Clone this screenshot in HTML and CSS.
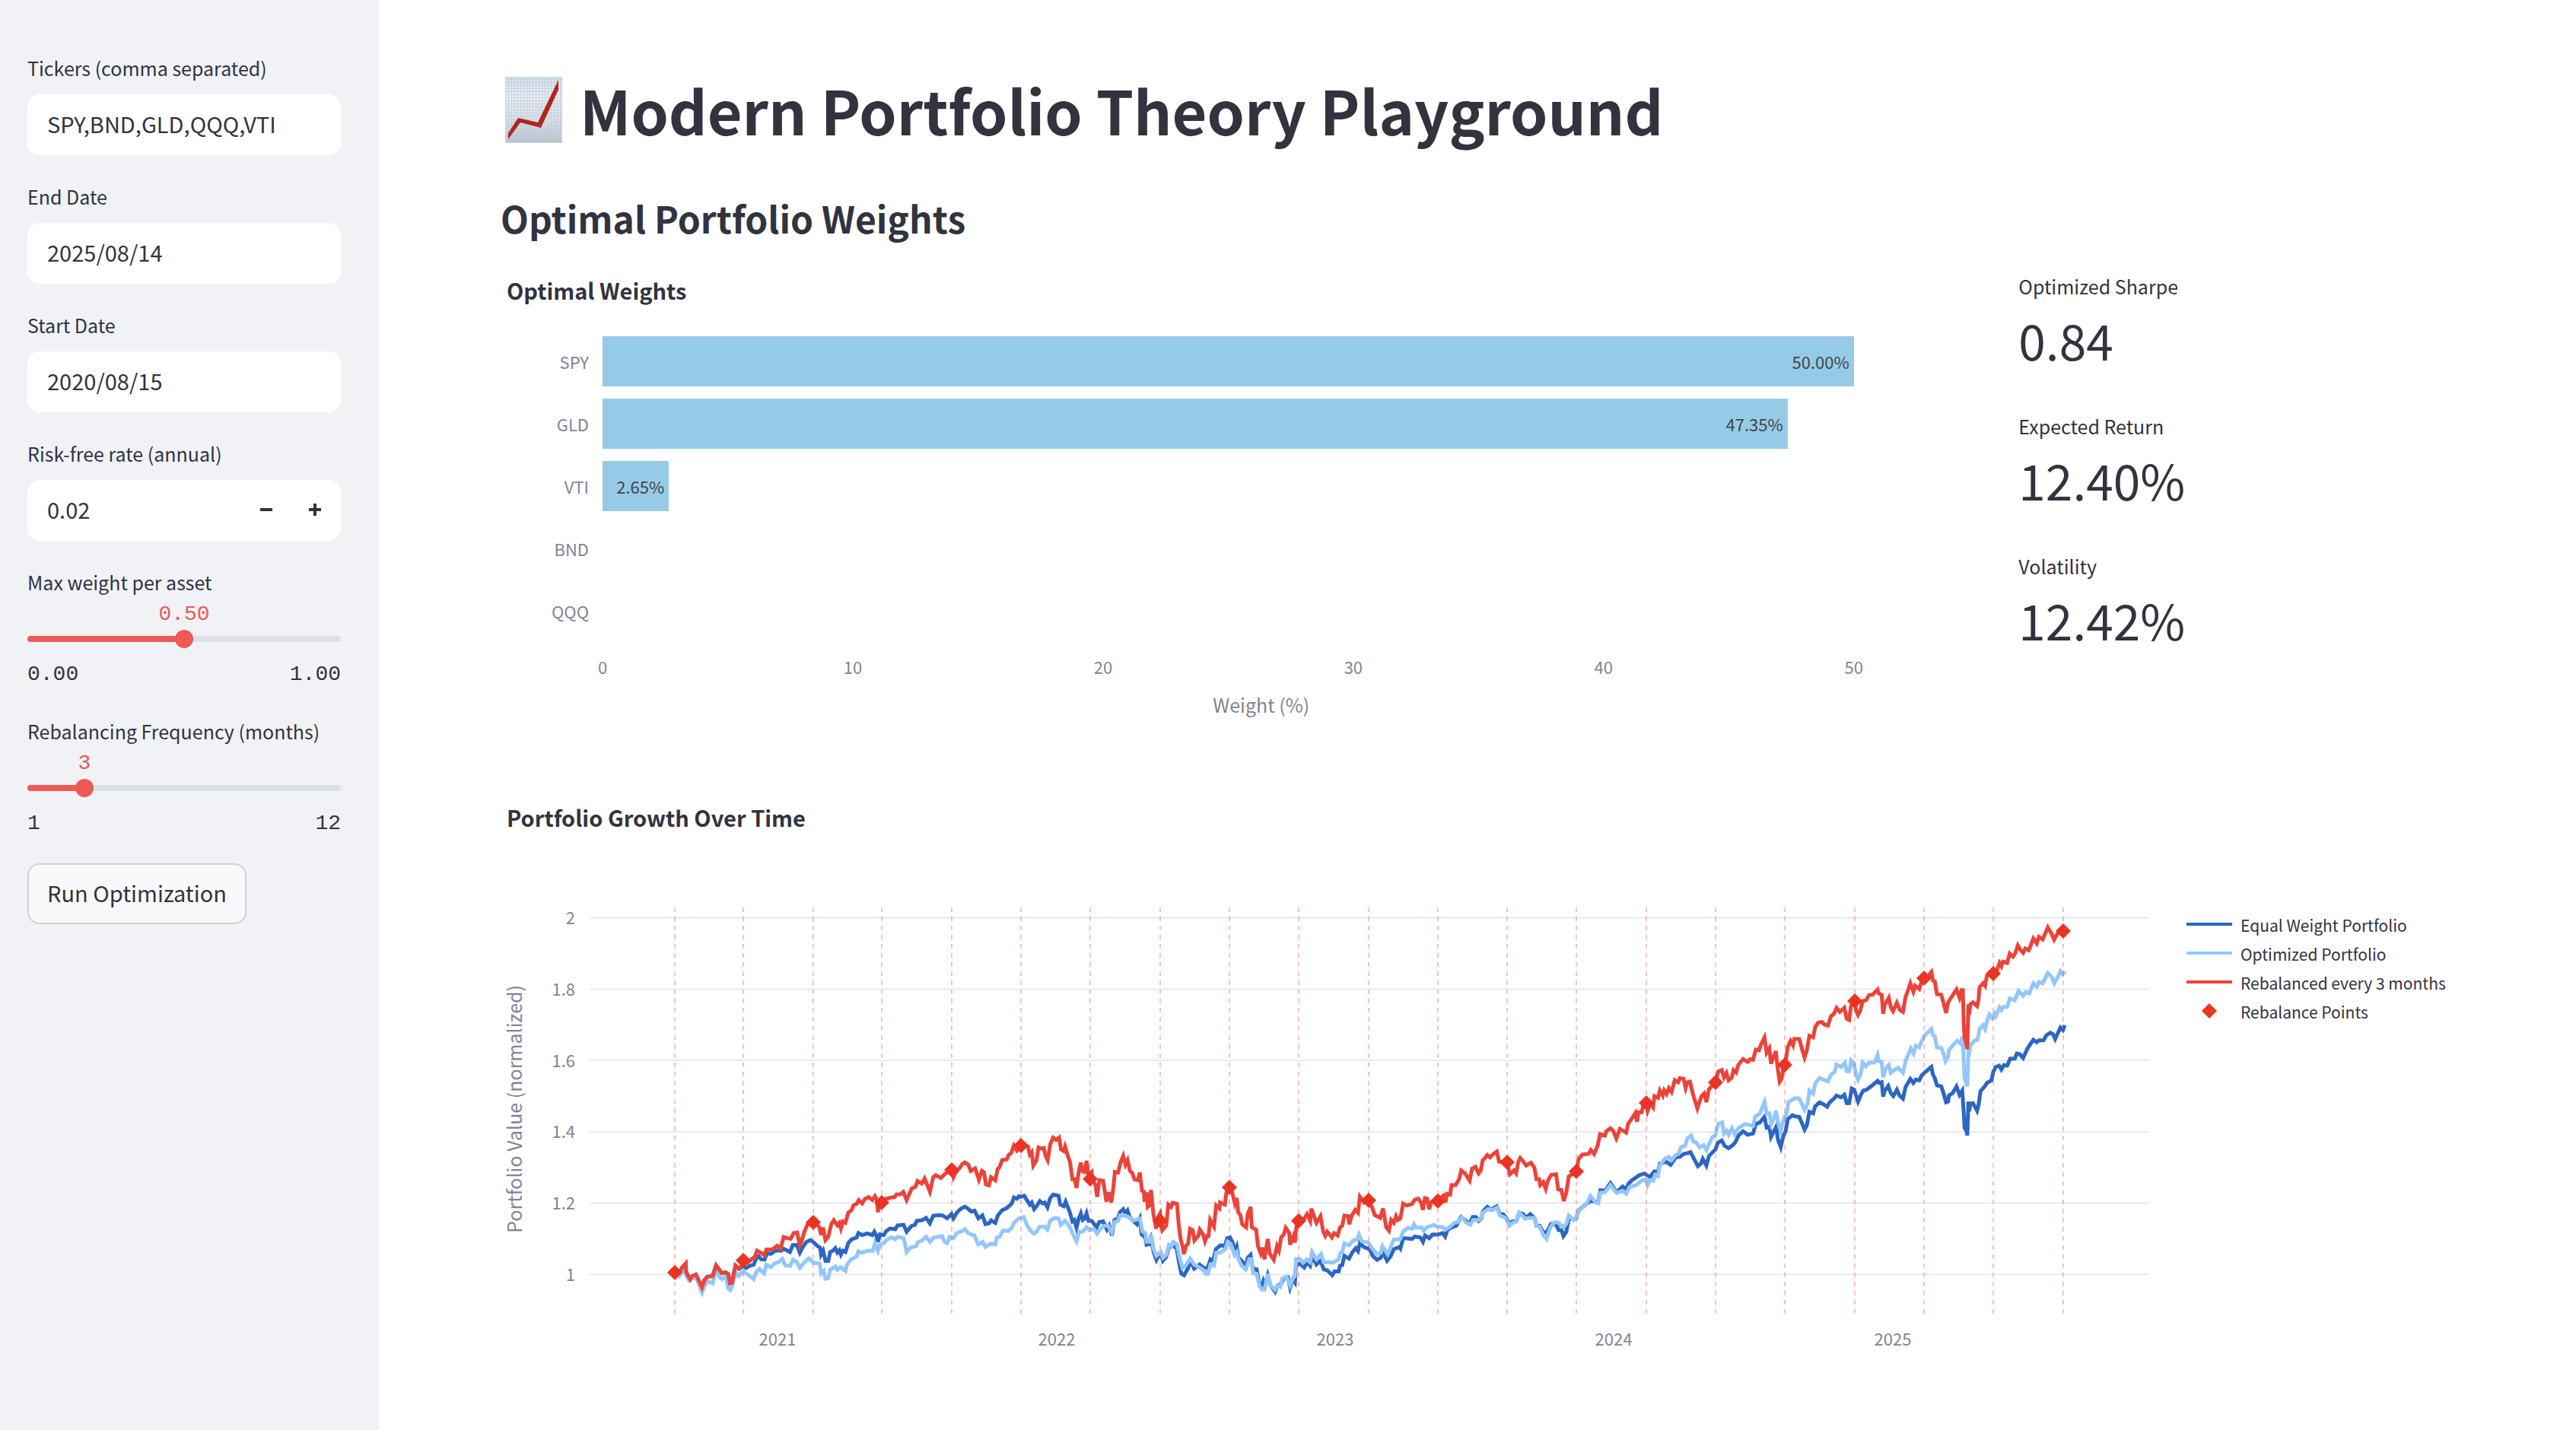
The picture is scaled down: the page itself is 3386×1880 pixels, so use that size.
FILE: index.html
```html
<!DOCTYPE html>
<html lang="en">
<head>
<meta charset="utf-8">
<title>Modern Portfolio Theory Playground</title>
<link rel="stylesheet" href="styles.css">
</head>
<body>
<div class="app">
  <aside class="sidebar">
    <form class="controls">
      <div class="field">
        <label class="label" for="tickers">Tickers (comma separated)</label>
        <div class="box"><input class="input" id="tickers" type="text" value="SPY,BND,GLD,QQQ,VTI"></div>
      </div>
      <div class="field">
        <label class="label" for="end">End Date</label>
        <div class="box"><input class="input" id="end" type="text" value="2025/08/14"></div>
      </div>
      <div class="field">
        <label class="label" for="start">Start Date</label>
        <div class="box"><input class="input" id="start" type="text" value="2020/08/15"></div>
      </div>
      <div class="field">
        <label class="label" for="rate">Risk-free rate (annual)</label>
        <div class="box">
          <input class="input" id="rate" type="text" inputmode="decimal" value="0.02">
          <button class="step" type="button" aria-label="Decrease"><svg width="16" height="16" viewBox="0 0 16 16"><path d="M0 6h16v4H0z"/></svg></button>
          <button class="step" type="button" aria-label="Increase"><svg width="16" height="16" viewBox="0 0 16 16"><path d="M6 0h4v6h6v4h-6v6H6v-6H0V6h6z"/></svg></button>
        </div>
      </div>
      <div class="slider" style="--fill: 50%">
        <label class="label" for="maxw">Max weight per asset</label>
        <div class="slider-value"><output for="maxw">0.50</output></div>
        <div class="track"><input id="maxw" class="range" type="range" min="0" max="1" step="0.01" value="0.5"></div>
        <div class="limits"><span>0.00</span><span>1.00</span></div>
      </div>
      <div class="slider" style="--fill: 18.18%">
        <label class="label" for="freq">Rebalancing Frequency (months)</label>
        <div class="slider-value"><output for="freq">3</output></div>
        <div class="track"><input id="freq" class="range" type="range" min="1" max="12" step="1" value="3"></div>
        <div class="limits"><span>1</span><span>12</span></div>
      </div>
      <button class="run" type="button">Run Optimization</button>
    </form>
  </aside>

  <main class="main">
    <h1 class="title">
      <svg class="title-icon" viewBox="0 0 75 87" aria-hidden="true">
        <defs>
          <linearGradient id="paper" x1="0" y1="0" x2="0" y2="1">
            <stop offset="0" stop-color="#dbe0e5"/><stop offset=".3" stop-color="#eeeeee"/>
            <stop offset=".7" stop-color="#dddedf"/><stop offset="1" stop-color="#bcc0c5"/>
          </linearGradient>
          <pattern id="grid" x="4" y="3" width="4" height="4" patternUnits="userSpaceOnUse">
            <path d="M0 .5H4M.5 0V4" stroke="#a9c9e6" stroke-width="1" opacity=".65"/>
          </pattern>
        </defs>
        <rect width="75" height="87" fill="url(#paper)"/>
        <rect width="75" height="87" fill="url(#grid)"/>
        <rect x=".5" y=".5" width="74" height="86" fill="none" stroke="#c9d2da"/>
        <path d="M4 74 17 54 43 60 70 4V17L47 67 20 60 4 82Z" fill="#b3251a"/>
      </svg>
      <span>Modern Portfolio Theory Playground</span>
    </h1>
    <h2 class="subtitle">Optimal Portfolio Weights</h2>

    <section class="overview">
      <div class="bar-chart">
        <h3 class="chart-title">Optimal Weights</h3>
        <div class="bars">
          <div class="bar-row"><span class="bar-name">SPY</span><div class="bar-area"><div class="bar" style="width: 95%">50.00%</div></div></div>
          <div class="bar-row"><span class="bar-name">GLD</span><div class="bar-area"><div class="bar" style="width: 89.97%">47.35%</div></div></div>
          <div class="bar-row"><span class="bar-name">VTI</span><div class="bar-area"><div class="bar" style="width: 5.04%">2.65%</div></div></div>
          <div class="bar-row"><span class="bar-name">BND</span><div class="bar-area"></div></div>
          <div class="bar-row"><span class="bar-name">QQQ</span><div class="bar-area"></div></div>
        </div>
        <div class="ticks"><span>0</span><span>10</span><span>20</span><span>30</span><span>40</span><span>50</span></div>
        <div class="axis-title">Weight (%)</div>
      </div>
      <dl class="metrics">
        <div><dt>Optimized Sharpe</dt><dd>0.84</dd></div>
        <div><dt>Expected Return</dt><dd>12.40%</dd></div>
        <div><dt>Volatility</dt><dd>12.42%</dd></div>
      </dl>
    </section>

    <section class="growth">
      <h3 class="chart-title">Portfolio Growth Over Time</h3>
      <div class="growth-body">
        <svg class="plot" id="plot" viewBox="0 0 2168 620" role="img" aria-label="Portfolio growth over time">
          <g class="grid">
            <path d="M117 45.5H2167M117 139.5H2167M117 233H2167M117 327H2167M117 420.5H2167M117 514.5H2167"/>
          </g>
          <g class="y-labels">
            <text x="98" y="54">2</text><text x="98" y="148">1.8</text><text x="98" y="242">1.6</text>
            <text x="98" y="335">1.4</text><text x="98" y="429">1.2</text><text x="98" y="523">1</text>
          </g>
          <g class="x-labels">
            <text x="364" y="608">2021</text><text x="731" y="608">2022</text><text x="1097" y="608">2023</text>
            <text x="1463" y="608">2024</text><text x="1830" y="608">2025</text>
          </g>
          <text class="y-title" transform="translate(28 297) rotate(-90)">Portfolio Value (normalized)</text>
          <g id="series" class="series"></g>
          <g id="rules" class="rules"></g>
          <g id="points" class="points"></g>
        </svg>
        <ul class="legend">
          <li><svg width="60" height="38"><path class="equal" d="M0 18H60"/></svg>Equal Weight Portfolio</li>
          <li><svg width="60" height="38"><path class="optimized" d="M0 18H60"/></svg>Optimized Portfolio</li>
          <li><svg width="60" height="38"><path class="rebalanced" d="M0 18H60"/></svg>Rebalanced every 3 months</li>
          <li><svg width="60" height="38"><path class="points" d="M30 8l10 10-10 10-10-10z"/></svg>Rebalance Points</li>
        </ul>
      </div>
    </section>
  </main>
</div>
<script src="script.js"></script>
</body>
</html>
```

FILE: styles.css
```css
* { box-sizing: border-box; }

body {
  margin: 0;
  background: #fff;
  color: #31333f;
  font-family: "Noto Sans CJK SC", "Noto Sans", sans-serif;
  font-size: 25px;
}

.app { display: flex; min-height: 100vh; }

.sidebar {
  flex: none;
  width: 498px;
  padding: 67px 50px 67px 36px;
  background: #f0f2f6;
}

.controls {
  display: flex;
  flex-direction: column;
  align-items: stretch;
  gap: 32px;
}

.label { display: block; line-height: 44px; }

.box {
  display: flex;
  height: 80px;
  margin-top: 13px;
  padding: 0 2px;
  border-radius: 16px;
  background: #fff;
}

.input {
  flex: 1;
  min-width: 0;
  padding: 0 24px 5px;
  border: 0;
  background: transparent;
  color: inherit;
  font: inherit;
  font-size: 29px;
}

.step {
  flex: none;
  width: 64px;
  padding: 0;
  border: 0;
  background: transparent;
  fill: #31333f;
}

.slider-value {
  position: relative;
  height: 41px;
  line-height: 41px;
  font-family: "Liberation Mono", monospace;
  font-size: 28px;
  color: #ed5a53;
}

.slider-value output {
  position: absolute;
  left: var(--fill);
  transform: translateX(-50%);
}

.track { position: relative; height: 24px; }

.track::before {
  content: "";
  position: absolute;
  inset: 8px 0;
  border-radius: 4px;
  background: linear-gradient(90deg, #ed5a53 var(--fill), #dadfe9 var(--fill));
}

.range {
  position: relative;
  display: block;
  width: calc(100% + 24px);
  height: 24px;
  margin: 0 -12px;
  appearance: none;
  background: transparent;
}

.range::-webkit-slider-thumb {
  appearance: none;
  width: 24px;
  height: 24px;
  border-radius: 50%;
  background: #ed5a53;
}

.limits {
  display: flex;
  justify-content: space-between;
  margin-top: 15px;
  line-height: 40px;
  font-family: "Liberation Mono", monospace;
  font-size: 28px;
}

.run {
  align-self: flex-start;
  height: 80px;
  padding: 0 24px 4px;
  border: 2px solid #d0d1d6;
  border-radius: 16px;
  background: #f9f9fb;
  color: inherit;
  font: inherit;
  font-size: 29px;
}

.main { flex: 1; min-width: 0; padding: 92px 160px; }

h1, h2, h3, dl, dd, ul { margin: 0; padding: 0; }

.title {
  display: flex;
  align-items: center;
  gap: 23px;
  padding-left: 6px;
  font-size: 79px;
  font-weight: 700;
  line-height: 104px;
}

.title-icon { flex: none; width: 75px; height: 87px; }

.subtitle {
  margin-top: 60px;
  font-size: 48px;
  font-weight: 600;
  line-height: 60px;
}

.overview {
  display: grid;
  grid-template-columns: minmax(0, 24fr) minmax(0, 7fr);
  gap: 32px;
  margin-top: 38px;
}

.chart-title {
  padding-left: 8px;
  font-size: 29px;
  font-weight: 700;
  line-height: 46px;
}

.bar-chart { padding: 4px 98px 0 0; }
.bars { margin-top: 30px; }

.bar-row { display: flex; align-items: center; height: 82px; }

.bar-name {
  flex: none;
  width: 134px;
  padding-right: 18px;
  text-align: right;
  font-size: 22px;
  color: #808495;
}

.bar-area { flex: 1; }

.bar {
  height: 66px;
  padding-right: 6px;
  background: #96cbe8;
  color: #444;
  font-size: 22px;
  line-height: 66px;
  text-align: right;
}

.ticks {
  display: flex;
  margin: 12px 0 0 134px;
  font-size: 22px;
  line-height: 40px;
  color: #808495;
}

.ticks span { flex: none; width: 19%; text-align: center; }
.ticks span:first-child { margin-left: -9.5%; }

.axis-title {
  margin: 10px 0 0 134px;
  line-height: 40px;
  text-align: center;
  color: #808495;
}

.metrics { display: flex; flex-direction: column; gap: 44px; }
.metrics dt { line-height: 44px; }
.metrics dd { font-size: 64px; line-height: 96px; }

.growth { margin-top: 105px; }
.growth-body { display: flex; align-items: flex-start; gap: 48px; margin-top: 64px; }

.plot { flex: 1; min-width: 0; height: auto; }
.plot text { fill: #808495; font-size: 22px; }
.plot .y-title { font-size: 25px; text-anchor: middle; }
.y-labels { text-anchor: end; }
.x-labels { text-anchor: middle; }
.grid { stroke: #e6eaf1; stroke-width: 2; }
.rules { stroke: #ea3323; stroke-opacity: .3; stroke-width: 2; stroke-dasharray: 6 6; }
.points { fill: #ea3323; }

.equal, .optimized, .rebalanced { fill: none; stroke-width: 4; }
.series path { stroke-width: 5; }
.equal { stroke: #2b66c4; }
.optimized { stroke: #93c7fb; }
.rebalanced { stroke: #ec4339; }

.legend {
  flex: none;
  width: 352px;
  padding-top: 36px;
  list-style: none;
  font-size: 21px;
  line-height: 38px;
}

.legend li { display: flex; gap: 11px; white-space: nowrap; }
.legend svg { flex: none; }
```

FILE: script.js
```js
// Each series is stored in four spans of time; a span has its own origin and scale.
const spans = [
  { x: 212, y: 320, sx: 3, sy: 3 },
  { x: 642, y: 20, sx: 2.8, sy: 2.613 },
  { x: 1182, y: 20, sx: 2.8, sy: 2.613 },
  { x: 1702, y: 40, sx: 3, sy: 3 }
];

const series = {
  equal: [
    "50,577 70,574 80,556 94,542 96,575 112,602 120,590 134,584 145,606 158,630 168,605 180,592 200,590 214,548 236,578 250,575 262,582 268,618 277,616 290,550 304,562 320,550 332,558 345,550 362,545 372,520 382,512 392,524 405,525 415,500 430,502 445,492 458,488 470,490 480,482 495,490 505,495 516,468 532,467 544,498 556,475 570,455 586,448 600,458 612,470 624,478 628,505 636,490 645,530 656,530 664,495 675,490 684,480 692,497 700,488 706,505 714,490 724,495 735,460 748,445 768,438 775,420 790,428 810,422 830,428 838,415 846,430 852,455 860,425 875,428 885,412 900,402 920,405 930,390 953,388 965,415 985,392 998,388 1005,372 1025,370 1042,360 1057,382 1070,352 1085,350 1105,350 1125,362 1142,345 1150,362 1163,340 1178,325 1195,316 1208,325 1220,335 1233,332 1248,362 1264,350 1276,385 1290,382 1298,370 1315,380 1325,350 1342,330 1360,322 1380,303 1388,280 1400,285 1408,275",
    "117,1025 130,1022 140,1038 150,1052 157,1045 166,1068 175,1058 187,1040 197,1048 205,1045 215,1062 225,1030 236,1018 256,1022 262,1052 275,1058 282,1042 298,1080 307,1110 314,1105 322,1132 330,1100 338,1082 345,1105 352,1100 359,1082 366,1108 378,1108 396,1130 406,1112 420,1110 434,1138 442,1125 452,1158 462,1105 475,1100 482,1078 494,1068 502,1082 510,1072 518,1095 530,1108 545,1120 555,1100 562,1155 575,1165 580,1190 590,1188 596,1170 606,1215 616,1242 625,1225 632,1220 640,1245 652,1232 662,1198 675,1195 690,1200 700,1255 708,1290 718,1295 733,1270 742,1245 755,1272 775,1258 790,1270 805,1270 815,1240 825,1245 835,1205 852,1192 868,1195 876,1168 887,1165 898,1185 905,1215 912,1198 918,1235 930,1245 945,1265 952,1235 963,1225 970,1270 985,1275 995,1325 1004,1335 1010,1315 1016,1330 1026,1295 1036,1330 1053,1352 1062,1330 1075,1325 1085,1305 1100,1302 1108,1338 1118,1310 1126,1320 1130,1258 1145,1255 1160,1268 1172,1250 1182,1262 1190,1230 1205,1258 1220,1245 1232,1275 1245,1278 1263,1295 1272,1282 1287,1282 1292,1262 1300,1260 1308,1228 1325,1238 1338,1215 1350,1202 1358,1212 1365,1185 1380,1198 1400,1205 1412,1228 1428,1242 1442,1235 1450,1215 1465,1245 1478,1230 1490,1205 1510,1198",
    "2,1203 12,1168 25,1168 45,1170 55,1162 75,1165 85,1180 93,1158 108,1168 120,1155 140,1155 158,1150 167,1162 175,1140 190,1130 208,1125 225,1095 240,1105 257,1118 268,1095 280,1095 290,1108 300,1100 306,1075 322,1060 335,1070 357,1058 368,1085 380,1085 392,1098 403,1120 415,1110 428,1110 440,1080 455,1085 462,1098 480,1085 495,1098 503,1125 515,1125 528,1148 540,1148 557,1118 575,1120 585,1140 595,1140 602,1160 613,1145 622,1100 640,1102 650,1098 658,1072 680,1055 700,1040 720,1042 730,1045 738,1003 755,1005 775,978 798,1010 820,990 832,1000 842,980 855,968 868,960 880,952 900,945 920,958 937,938 950,940 957,912 980,905 997,915 1015,890 1030,888 1045,878 1060,875 1070,872 1080,890 1097,920 1108,912 1115,895 1128,918 1138,885 1162,862 1170,840 1185,832 1195,850 1210,858 1225,848 1235,838 1246,815 1263,800 1280,812 1300,808 1310,775 1325,770 1342,750 1350,788 1360,785 1366,820 1385,785 1392,830 1402,855 1410,820 1420,800 1428,758 1445,745",
    "0,800 15,802 25,825 36,852 45,835 55,782 70,788 78,760 95,745 110,752 125,762 135,745 152,730 162,718 180,725 193,715 202,748 212,748 222,690 232,695 247,742 258,715 268,698 280,695 300,680 324,660 330,668 340,665 346,722 352,700 366,680 376,708 386,720 400,695 410,718 424,730 434,685 453,652 465,668 475,655 488,658 497,640 512,625 536,605 542,635 550,650 558,678 575,682 583,705 594,745 602,742 605,718 620,708 635,682 647,715 658,698 664,790 667,845 673,855 678,875 682,742 685,780 690,750 700,748 716,778 722,755 730,700 748,680 755,668 773,658 780,625 790,605 803,600 812,615 822,598 835,600 847,572 865,572 873,552 885,555 898,570 915,532 938,498 952,508 960,500 978,500 990,480 1005,470 1015,475 1024,495 1045,450 1055,460 1062,440"
  ],
  optimized: [
    "50,577 68,590 80,575 90,562 97,590 108,608 120,600 134,595 145,620 158,655 170,625 180,612 200,618 214,565 225,590 237,602 252,590 262,640 270,645 280,622 290,575 303,590 320,570 332,580 345,588 362,602 372,575 385,562 403,580 412,545 430,555 445,540 460,535 475,522 487,548 506,550 517,525 532,535 544,558 560,538 580,520 600,538 622,540 628,580 638,570 645,600 656,598 664,565 684,552 692,565 705,555 724,570 730,545 745,525 768,512 775,492 790,498 810,490 832,490 840,460 852,490 860,465 875,460 885,448 905,436 920,445 930,435 953,440 958,460 965,495 980,478 1002,472 1010,455 1025,450 1042,435 1057,455 1072,438 1105,432 1115,455 1125,460 1135,435 1150,440 1163,420 1178,415 1195,405 1210,422 1233,430 1247,465 1265,455 1276,475 1295,462 1315,465 1320,438 1332,435 1345,410 1365,412 1380,400 1388,380 1408,362",
    "117,1098 128,1095 138,1120 152,1140 165,1152 175,1145 187,1128 205,1128 215,1138 225,1108 240,1098 256,1100 264,1122 280,1108 298,1130 307,1150 322,1178 332,1145 345,1145 359,1130 370,1140 385,1135 398,1152 410,1135 425,1125 438,1125 452,1148 462,1112 475,1108 482,1090 500,1090 515,1095 530,1108 555,1100 565,1145 575,1150 580,1180 590,1180 596,1155 606,1205 616,1228 632,1215 640,1235 652,1225 662,1190 672,1195 678,1180 692,1188 700,1230 712,1270 725,1260 740,1238 755,1258 775,1268 790,1278 798,1290 806,1290 815,1258 828,1262 836,1218 850,1218 870,1205 878,1180 890,1188 903,1225 912,1215 918,1240 930,1262 945,1275 958,1240 965,1240 972,1288 985,1290 995,1332 1005,1345 1015,1340 1026,1290 1036,1330 1053,1345 1062,1330 1072,1335 1080,1305 1095,1300 1108,1330 1118,1305 1126,1298 1130,1240 1145,1240 1155,1252 1170,1240 1182,1250 1189,1215 1205,1240 1222,1222 1232,1250 1250,1250 1265,1252 1287,1240 1293,1218 1300,1215 1308,1185 1325,1192 1340,1175 1355,1172 1362,1155 1372,1178 1395,1182 1412,1205 1428,1222 1442,1218 1448,1195 1467,1222 1480,1195 1490,1172 1510,1172",
    "2,1170 12,1145 30,1132 45,1135 52,1120 60,1132 80,1130 88,1142 100,1130 125,1122 140,1128 158,1130 168,1138 185,1128 200,1115 215,1112 228,1095 245,1115 260,1120 270,1105 290,1105 298,1100 306,1080 325,1068 345,1070 358,1062 368,1090 390,1098 403,1125 415,1115 428,1110 440,1080 460,1100 480,1098 495,1098 503,1125 515,1128 528,1158 540,1170 552,1135 565,1115 580,1112 602,1130 613,1118 622,1090 640,1105 650,1095 658,1072 685,1052 702,1022 720,1045 730,1048 738,1012 755,1010 775,985 798,1012 820,1005 833,1015 845,992 870,985 890,970 907,965 912,985 920,968 932,970 940,950 950,955 957,918 975,895 990,888 1000,900 1015,882 1025,878 1035,855 1050,850 1058,825 1072,815 1080,835 1090,838 1103,855 1118,848 1128,865 1138,845 1150,820 1162,812 1172,775 1186,770 1193,808 1202,798 1210,812 1222,790 1232,810 1246,790 1270,775 1300,782 1308,750 1325,740 1342,700 1350,740 1360,738 1367,775 1375,760 1384,730 1392,770 1402,800 1412,760 1425,735 1430,700 1445,692",
    "0,728 15,730 25,750 36,775 48,750 55,698 70,710 78,670 95,648 110,655 128,662 140,635 155,625 162,595 180,605 195,588 202,622 212,622 220,580 230,590 238,630 247,655 258,630 265,588 277,602 290,588 312,588 324,558 328,582 340,585 346,645 354,615 368,598 376,628 388,618 405,608 424,628 435,580 455,532 466,552 475,522 488,528 497,505 510,480 536,455 542,480 550,485 558,528 575,530 583,550 592,582 602,565 605,540 625,515 638,502 650,512 660,485 664,590 667,650 678,682 682,545 685,550 690,520 705,502 718,498 726,455 740,440 748,455 757,420 765,398 775,412 785,395 790,405 805,370 812,380 820,368 835,368 845,335 865,342 880,305 898,325 908,310 922,315 938,275 952,288 960,270 975,275 995,235 1010,250 1021,275 1035,250 1045,228 1054,240 1062,228"
  ],
  rebalanced: [
    "50,577 70,574 80,556 94,540 96,575 112,602 120,590 134,584 145,606 158,634 168,605 180,592 200,590 214,548 236,578 250,575 262,582 268,618 277,616 290,548 304,560 320,545 340,535 358,520 366,515 375,490 390,498 404,508 412,485 435,485 455,470 468,482 480,436 495,440 508,443 520,420 533,418 544,468 552,450 562,415 575,385 597,377 612,385 622,400 628,428 635,398 645,448 656,435 668,385 678,370 692,390 700,380 706,402 714,375 724,380 735,340 748,330 756,310 768,305 776,290 790,303 800,286 815,278 830,290 840,275 848,290 852,338 857,305 868,300 885,285 895,282 918,278 925,268 940,268 952,258 965,290 985,245 1000,238 1008,215 1025,225 1036,205 1057,257 1070,200 1080,192 1100,203 1115,188 1142,171 1150,200 1158,182 1175,162 1185,148 1195,142 1208,150 1218,175 1235,165 1250,210 1262,175 1270,180 1278,228 1290,232 1298,200 1315,212 1324,168 1332,160 1342,132 1360,130 1368,112 1378,104 1388,75 1400,95 1416,76",
    "117,850 143,852 150,880 157,872 163,918 175,900 182,856 195,860 202,858 208,885 216,900 225,845 236,822 247,830 258,822 265,862 275,868 280,853 290,885 298,905 307,965 315,965 322,995 330,940 338,908 345,938 352,940 359,902 366,950 378,940 380,965 392,985 398,1025 406,968 420,970 432,1042 440,1010 450,1045 457,1000 463,940 475,942 485,905 494,885 502,915 510,900 518,935 528,945 535,965 548,968 555,942 563,1005 570,1008 572,1042 580,1010 584,1060 590,1055 596,1002 605,1085 615,1135 622,1095 630,1082 638,1140 652,1125 660,1052 670,1060 676,1046 692,1050 698,1120 705,1170 712,1195 717,1222 725,1195 733,1185 740,1135 750,1140 756,1175 770,1160 776,1138 788,1155 795,1178 802,1160 808,1160 814,1105 828,1128 836,1055 848,1065 850,1045 868,1052 874,1010 884,993 895,1010 905,1048 912,1030 917,1078 925,1088 932,1120 946,1130 952,1085 963,1060 967,1130 983,1138 990,1195 1000,1220 1007,1200 1014,1240 1026,1170 1033,1220 1048,1242 1055,1215 1060,1195 1067,1210 1075,1165 1085,1155 1092,1132 1105,1150 1108,1190 1120,1162 1126,1182 1132,1120 1140,1108 1160,1100 1170,1085 1182,1108 1186,1066 1205,1115 1220,1092 1230,1145 1238,1160 1245,1145 1262,1165 1270,1150 1283,1158 1292,1130 1300,1125 1308,1090 1322,1092 1326,1120 1335,1090 1348,1070 1358,1080 1365,1025 1380,1045 1395,1037 1410,1062 1420,1088 1440,1098 1450,1065 1462,1130 1472,1142 1480,1105 1490,1115 1498,1092 1505,1105",
    "2,1100 12,1048 25,1055 45,1050 55,1035 68,1032 78,1045 85,1070 92,1030 100,1032 108,1068 115,1045 140,1040 160,1022 168,1045 173,1015 185,1018 190,985 205,985 218,965 226,935 240,945 257,970 266,928 278,922 290,945 298,935 305,900 314,892 322,882 332,890 345,878 357,870 365,905 395,908 405,948 420,935 428,945 436,905 443,892 455,905 465,918 482,908 495,925 503,965 513,965 517,985 528,975 537,998 545,970 557,950 575,948 583,1000 595,1002 603,1040 613,1010 622,955 640,945 650,937 658,895 672,880 695,878 703,865 715,878 728,850 737,810 755,815 760,800 775,790 786,800 797,825 810,792 833,805 840,775 855,755 867,738 873,768 878,735 890,735 895,715 907,703 912,730 922,705 932,718 937,680 950,685 957,660 968,678 973,660 982,672 990,652 1000,665 1012,625 1024,632 1030,618 1044,620 1052,652 1058,632 1068,630 1078,670 1095,722 1103,700 1110,680 1120,670 1128,700 1138,655 1162,632 1172,595 1185,590 1193,615 1202,600 1210,625 1222,615 1228,590 1238,598 1246,572 1263,552 1280,562 1290,553 1300,555 1310,520 1322,522 1330,500 1342,478 1350,530 1360,515 1366,568 1375,545 1384,525 1390,580 1398,630 1405,620 1410,590 1418,573 1428,510 1438,490 1447,505 1452,483",
    "0,495 15,495 25,530 36,568 45,540 55,482 70,488 78,448 90,430 105,428 115,438 128,442 140,405 152,395 162,372 175,388 193,372 202,415 212,420 218,370 225,350 233,345 240,385 247,400 255,385 265,345 278,342 290,322 305,320 312,312 324,300 328,315 340,320 346,395 352,360 368,332 376,370 385,385 400,352 412,380 424,388 434,330 445,300 453,275 465,308 472,285 488,298 495,275 507,256 520,250 536,230 542,265 550,268 558,318 575,320 582,345 594,392 602,350 615,330 625,315 635,300 647,332 655,302 660,302 664,440 667,490 672,505 678,535 682,358 685,400 690,358 700,350 716,365 722,340 726,290 740,275 748,285 755,245 780,236 795,222 805,195 812,208 818,190 835,195 845,158 858,170 866,158 877,126 888,145 898,155 906,138 920,145 930,120 938,98 952,118 960,92 975,102 995,55 1010,80 1020,103 1030,85 1040,70 1054,69"
  ]
};

const rebalances = [
  [229, 512], [319, 496], [411, 446], [501, 420], [593, 377], [684, 345], [775, 389],
  [867, 444], [958, 400], [1049, 444], [1141, 417], [1232, 418], [1323, 367], [1414, 379],
  [1506, 289], [1597, 262], [1688, 239], [1780, 155], [1871, 125], [1962, 119], [2054, 63]
];

const add = (parent, attrs) => {
  const el = document.createElementNS("http://www.w3.org/2000/svg", "path");
  for (const key in attrs) el.setAttribute(key, attrs[key]);
  document.getElementById(parent).append(el);
};

for (const [name, parts] of Object.entries(series)) {
  const points = parts.flatMap((part, i) => part.split(" ").map((pair) => {
    const [x, y] = pair.split(",").map(Number);
    const s = spans[i];
    return (s.x + x / s.sx).toFixed(1) + " " + (s.y + y / s.sy).toFixed(1);
  }));
  add("series", { class: name, d: "M" + points.join("L") });
}

for (const [x, y] of rebalances) {
  add("rules", { d: `M${x} 566V31` });
  add("points", { d: `M${x} ${y - 10}l10 10-10 10-10-10z` });
}
```
